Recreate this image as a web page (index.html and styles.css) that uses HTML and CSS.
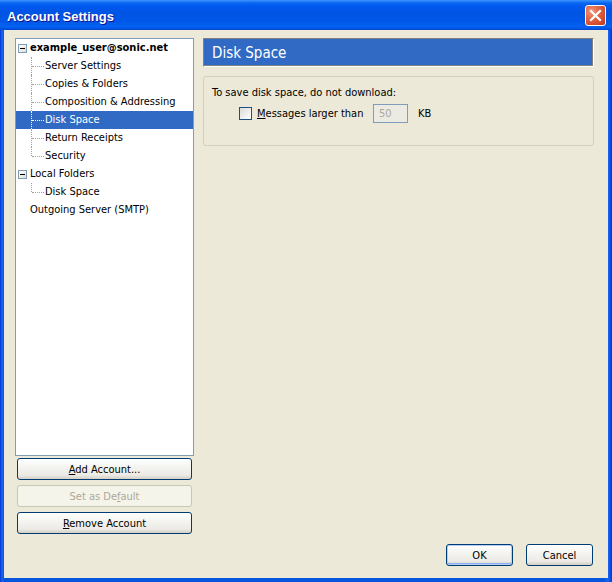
FILE: index.html
```html
<!DOCTYPE html>
<html lang="en">
<head>
    <meta charset="UTF-8">
    <meta name="viewport" content="width=device-width, initial-scale=1.0">
    <title>Account Settings</title>

    <link rel="stylesheet" href="styles.css">
</head>
<body>
    <div class="window">
        <div class="titlebar">
            <span class="title">Account Settings</span>
            <span class="close-btn">
                <svg width="13" height="13" viewBox="0 0 13 13">
                    <path d="M2 2 L11 11 M11 2 L2 11" stroke="#fff" stroke-width="2.2" stroke-linecap="square"/>
                </svg>
            </span>
        </div>

        <div class="client">
            <div class="main">
                <div class="sidebar">
                    <ul class="tree">
                        <li class="row root"><span class="twisty"></span><b>example_user@sonic.net</b></li>
                        <li class="row child">Server Settings</li>
                        <li class="row child">Copies &amp; Folders</li>
                        <li class="row child">Composition &amp; Addressing</li>
                        <li class="row child selected">Disk Space</li>
                        <li class="row child">Return Receipts</li>
                        <li class="row child last">Security</li>
                        <li class="row root"><span class="twisty"></span>Local Folders</li>
                        <li class="row child last">Disk Space</li>
                        <li class="row root plain">Outgoing Server (SMTP)</li>
                    </ul>
                    <div class="side-buttons">
                        <button class="btn"><u>A</u>dd Account...</button>
                        <button class="btn" disabled>Set as De<u>f</u>ault</button>
                        <button class="btn"><u>R</u>emove Account</button>
                    </div>
                </div>

                <div class="panel">
                    <div class="panel-header">Disk Space</div>
                    <div class="groupbox">
                        <div class="group-label">To save disk space, do not download:</div>
                        <div class="option">
                            <span class="checkbox"></span>
                            <span class="option-label"><u>M</u>essages larger than</span>
                            <span class="num-field">50</span>
                            <span class="unit">KB</span>
                        </div>
                    </div>
                </div>
            </div>

            <div class="footer">
                <button class="btn btn-default">OK</button>
                <button class="btn">Cancel</button>
            </div>
        </div>
    </div>
</body>
</html>
```

FILE: styles.css
```css
/* XP style dialog */
body {
    margin: 0;
    font-family: "DejaVu Sans Condensed", "DejaVu Sans", sans-serif;
    font-size: 11px;
    color: #000;
}

.window {
    width: 612px;
    height: 582px;
    display: flex;
    flex-direction: column;
    background: linear-gradient(to right, #0831d9 0, #166aee 2px, #0855dd 4px, #0855dd 604px, #166aee 608px, #0831d9 612px);
}

.titlebar {
    height: 30px;
    flex: none;
    display: flex;
    align-items: center;
    justify-content: space-between;
    padding: 0 6px 0 7px;
    background: linear-gradient(to bottom, #3d95ff 0, #0a66f0 3px, #0058ee 6px, #0054e3 14px, #0058e8 22px, #0462f2 27px, #0045d0 30px);
}

.title {
    color: #fff;
    font-family: "Liberation Sans", sans-serif;
    font-weight: bold;
    font-size: 13px;
    text-shadow: 1px 1px #0f1089;
    margin-top: 2px;
}

.close-btn {
    width: 19px;
    height: 19px;
    border: 1px solid #fff;
    border-radius: 3px;
    background: radial-gradient(circle at 30% 30%, #f09880 0, #e06040 45%, #c2351a 100%);
    display: flex;
    align-items: center;
    justify-content: center;
    margin-top: 1px;
}

.client {
    flex: 1;
    margin: 0 4px 4px 4px;
    background: #ece9d8;
    display: flex;
    flex-direction: column;
    padding: 8px 14px 12px 11px;
}

.main {
    flex: 1;
    display: flex;
    gap: 9px;
    min-height: 0;
}

/* left side */
.sidebar {
    width: 179px;
    display: flex;
    flex-direction: column;
}

.tree {
    flex: 1;
    margin: 0;
    padding: 0;
    list-style: none;
    background: #fff;
    border: 1px solid #7f9db9;
}

.row {
    position: relative;
    height: 18px;
    line-height: 18px;
    white-space: nowrap;
}

.root {
    padding-left: 2px;
    display: flex;
    align-items: center;
}

.root.plain {
    padding-left: 14px;
}

.twisty {
    position: relative;
    width: 7px;
    height: 7px;
    border: 1px solid #7f9db9;
    background: linear-gradient(to bottom right, #fff, #e0ddd0);
    margin-right: 3px;
}

.twisty::after {
    content: "";
    position: absolute;
    left: 1px;
    top: 3px;
    width: 5px;
    height: 1px;
    background: #000;
}

.child {
    padding-left: 29px;
}

/* tree connector lines */
.child::before {
    content: "";
    position: absolute;
    left: 16px;
    top: 9px;
    width: 12px;
    border-top: 1px dotted #a0a0a0;
}

.child::after {
    content: "";
    position: absolute;
    left: 15px;
    top: 0;
    bottom: 0;
    border-left: 1px dotted #a0a0a0;
}

.child.last::after {
    bottom: 9px;
}

.selected {
    background: #316ac5;
    color: #fff;
}

.selected::before,
.selected::after {
    border-color: #fff;
}

.side-buttons {
    display: flex;
    flex-direction: column;
    gap: 5px;
    margin: 2px 0 0 2px;
}

.side-buttons .btn {
    width: 175px;
}

/* buttons */
.btn {
    height: 22px;
    padding: 0;
    font: inherit;
    color: #000;
    border: 1px solid #003c74;
    border-radius: 3px;
    background: linear-gradient(to bottom, #fff 0, #f4f4f0 40%, #ecebe6 80%, #d6d0c5 100%);
}

.btn:disabled {
    color: #aca899;
    border-color: #c9c7ba;
    background: #f5f4ea;
}

.btn-default {
    box-shadow: inset 0 0 0 1px #b6ccf2, inset 0 -1px 0 1px #8cb0f0;
}

/* right panel */
.panel {
    flex: 1;
    display: flex;
    flex-direction: column;
}

.panel-header {
    height: 25px;
    line-height: 25px;
    padding: 2px 0 0 8px;
    background: #316ac5;
    color: #fff;
    font-size: 15px;
    border: 1px solid #fff;
    border-top-color: #808080;
    border-left-color: #808080;
    box-shadow: inset -1px -1px #808080;
}

.groupbox {
    margin-top: 9px;
    height: 70px;
    border: 1px solid #d0d0bf;
    border-radius: 3px;
    padding: 9px 0 0 8px;
    box-sizing: border-box;
}

.group-label {
    line-height: 14px;
}

.option {
    display: flex;
    align-items: center;
    margin-top: 4px;
    padding-left: 27px;
    height: 19px;
}

.checkbox {
    width: 11px;
    height: 11px;
    border: 1px solid #1c5180;
    background: linear-gradient(to bottom right, #dcdcd7, #fff);
    margin-right: 5px;
}

.option-label {
    width: 116px;
}

.num-field {
    width: 28px;
    height: 17px;
    line-height: 17px;
    padding-left: 5px;
    border: 1px solid #7f9db9;
    background: #ebebe4;
    color: #aca899;
}

.unit {
    margin-left: 10px;
}

.footer {
    display: flex;
    justify-content: flex-end;
    gap: 13px;
    margin: 10px 1px 0 0;
}

.footer .btn {
    width: 67px;
}
```
